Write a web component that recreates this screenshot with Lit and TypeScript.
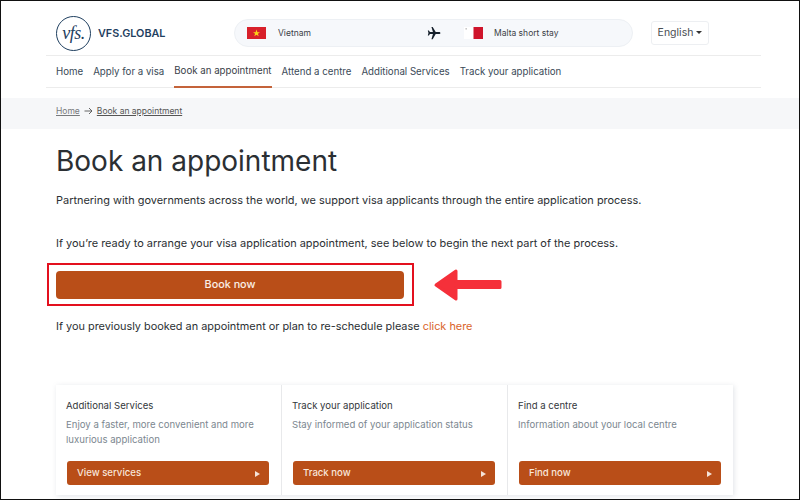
import { LitElement, html, css } from "lit";
import { customElement } from "lit/decorators.js";

@customElement("app-root")
export class AppRoot extends LitElement {
  static styles = css`
    :host { display: block; width: 800px; height: 500px; box-sizing: border-box; overflow: hidden; position: relative; background: #fff; font-family: Inter, "Liberation Sans", sans-serif; color: #2b2f33; border: 1px solid #111; }
    .top { margin: 0 38px 0 45px; height: 55px; box-sizing: border-box; padding: 10px 0 0 10px; border-bottom: 1px solid #ececec; display: flex; align-items: center; }
    .logo { display: flex; align-items: center; gap: 7px; width: 178px; flex: none; }
    .circle { width: 35px; height: 35px; border: 1.2px solid #1f3f5f; border-radius: 50%; box-sizing: border-box; display: flex; align-items: center; justify-content: center; font: italic 18px "Liberation Serif", serif; color: #1f3f5f; letter-spacing: -0.5px; }
    .brand { font-size: 10.8px; font-weight: 600; color: #1f3f5f; }
    .pill { width: 399px; height: 28px; box-sizing: border-box; flex: none; background: #f6f8fb; border: 1px solid #edf0f4; border-radius: 14px; display: flex; align-items: center; font-size: 8.5px; color: #3b4046; padding-left: 12px; }
    .flag { width: 19px; height: 12px; flex: none; display: block; }
    .from { margin-left: 12px; width: 149px; }
    .plane { width: 14px; height: 14px; flex: none; }
    .to { margin-left: 11px; }
    .gap { width: 23px; flex: none; }
    .lang { margin-left: 18px; width: 58px; height: 24px; box-sizing: border-box; border: 1px solid #edeff2; border-radius: 3px; display: flex; align-items: center; justify-content: center; gap: 3px; font-size: 10.5px; color: #4a4e53; padding-bottom: 1px; }
    .caret { width: 0; height: 0; border-left: 3px solid transparent; border-right: 3px solid transparent; border-top: 3px solid #333; }
    nav { margin: 0 38px 0 45px; height: 32px; box-sizing: border-box; border-bottom: 1px solid #ececec; display: flex; gap: 10px; padding-left: 10px; font-size: 9.7px; color: #3a4a57; }
    nav a { display: flex; align-items: center; height: 32px; box-sizing: border-box; padding-bottom: 1px; }
    nav a.on { border-bottom: 2px solid #c4633a; color: #3a4148; }
    .crumbs { margin-top: 10px; height: 31px; box-sizing: border-box; background: #f6f7f9; padding: 0 0 6px 55px; display: flex; align-items: center; gap: 4px; font-size: 8.5px; color: #555; }
    .crumbs u { text-underline-offset: 1px; }
    .crumbs .home { color: #77797c; }
    main { padding: 15px 0 0 55px; }
    h1 { margin: 0; font-size: 28px; font-weight: 400; line-height: 35px; color: #2b2f33; }
    p { margin: 0; font-size: 10.95px; line-height: 14px; color: #2b2f33; }
    .p1 { margin-top: 14px; }
    .p2 { margin-top: 29px; }
    .book { margin-top: 21px; width: 348px; height: 28px; background: #b94e18; border-radius: 4px; display: flex; align-items: center; justify-content: center; color: #fbeee6; font-size: 10.8px; font-weight: 500; padding-bottom: 1px; box-sizing: border-box; }
    .p3 { margin-top: 20px; font-size: 10.9px; }
    .p3 a { color: #d9642c; }
    .cards { margin-top: 52px; width: 677px; height: 110px; display: grid; grid-template-columns: 225px 226px 226px; box-shadow: 1px 1px 5px rgba(120,130,150,.22); }
    .card { padding: 14px 12px 0 10px; box-sizing: border-box; border-left: 1px solid #e8e9eb; display: flex; flex-direction: column; }
    .card:first-child { border-left: none; }
    .card h3 { margin: 0; font-size: 9.6px; font-weight: 400; line-height: 14px; color: #33373b; }
    .card .d { margin-top: 4px; font-size: 9.6px; line-height: 15px; color: #7c8790; height: 32px; }
    .go { margin: 12px 0 0 1px; height: 24px; box-sizing: border-box; background: #b94e18; border-radius: 3px; display: flex; align-items: center; justify-content: space-between; padding: 0 9px 2px 10px; color: #f8e6da; font-size: 9.6px; font-weight: 500; }
    .tri { width: 0; height: 0; border-left: 5px solid #f5e3d8; border-top: 3px solid transparent; border-bottom: 3px solid transparent; margin-top: 3px; }
    .mark { position: absolute; left: 46px; top: 262px; width: 367px; height: 43px; box-sizing: border-box; border: 2px solid #e3101e; }
    .arrow { position: absolute; left: 432px; top: 267px; width: 69px; height: 34px; }
  `;

  private card(t: string, d: string, b: string) {
    return html`<div class="card"><h3>${t}</h3><div class="d">${d}</div><div class="go"><span>${b}</span><span class="tri"></span></div></div>`;
  }

  render() {
    return html`
      <div class="top">
        <div class="logo"><div class="circle">vfs.</div><span class="brand">VFS.GLOBAL</span></div>
        <div class="pill">
          <svg class="flag" viewBox="0 0 19 12"><rect width="19" height="12" fill="#d8202a"/><polygon fill="#fbd417" points="9.5,2.6 10.4,5.2 13,5.2 10.9,6.8 11.7,9.3 9.5,7.8 7.3,9.3 8.1,6.8 6,5.2 8.6,5.2"/></svg>
          <span class="from">Vietnam</span>
          <svg class="plane" viewBox="0 0 24 24"><path fill="#16202b" d="M23 12c0-1-1-1.9-2.4-1.9h-5.7L9.8 1.5H7.6l2.6 8.6H5L3.2 7.6H1.4l1.1 4.4-1.1 4.4h1.8L5 13.9h5.2l-2.6 8.6h2.2l5.1-8.6h5.7C22 13.9 23 13 23 12z"/></svg>
          <span class="gap"></span>
          <svg class="flag" viewBox="0 0 19 12"><rect width="9.5" height="12" fill="#fff"/><rect x="9.5" width="9.5" height="12" fill="#cf142b"/><rect x="1.4" y="1" width="1.6" height="1.6" fill="#c9c9c9"/></svg>
          <span class="to">Malta short stay</span>
        </div>
        <div class="lang">English<span class="caret"></span></div>
      </div>
      <nav>
        <a>Home</a><a>Apply for a visa</a><a class="on">Book an appointment</a><a>Attend a centre</a><a>Additional Services</a><a>Track your application</a>
      </nav>
      <div class="crumbs">
        <u class="home">Home</u>
        <svg width="9" height="8" viewBox="0 0 9 8"><path d="M0.5 4H8M5 1l3 3-3 3" fill="none" stroke="#555" stroke-width="0.9"/></svg>
        <u>Book an appointment</u>
      </div>
      <main>
        <h1>Book an appointment</h1>
        <p class="p1">Partnering with governments across the world, we support visa applicants through the entire application process.</p>
        <p class="p2">If you’re ready to arrange your visa application appointment, see below to begin the next part of the process.</p>
        <div class="book">Book now</div>
        <p class="p3">If you previously booked an appointment or plan to re-schedule please <a>click here</a></p>
        <div class="cards">
          ${this.card("Additional Services", "Enjoy a faster, more convenient and more luxurious application", "View services")}
          ${this.card("Track your application", "Stay informed of your application status", "Track now")}
          ${this.card("Find a centre", "Information about your local centre", "Find now")}
        </div>
      </main>
      <div class="mark"></div>
      <svg class="arrow" viewBox="0 0 69 34"><path fill="#f5303a" stroke="#f5303a" stroke-width="3" stroke-linejoin="round" d="M3 17 L23 3 V13.5 H67 V19.5 H23 V31 Z"/></svg>
    `;
  }
}
